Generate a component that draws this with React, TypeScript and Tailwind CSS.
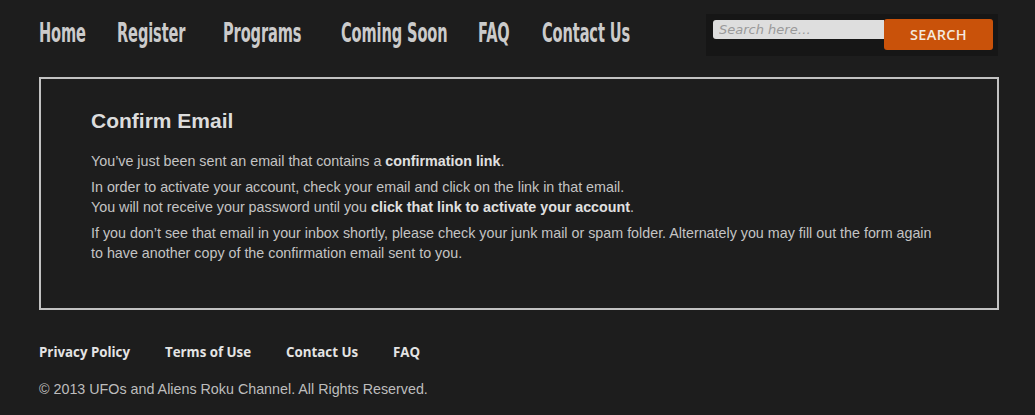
import React from 'react';

const navItems = [
  { label: 'Home', w: 'w-[44px]' },
  { label: 'Register', w: 'w-[72px]' },
  { label: 'Programs', w: 'w-[84px]' },
  { label: 'Coming Soon', w: 'w-[103px]' },
  { label: 'FAQ', w: 'w-[30px]' },
  { label: 'Contact Us', w: 'w-[91px]' },
];
const footerLinks = ['Privacy Policy', 'Terms of Use', 'Contact Us', 'FAQ'];

const App: React.FC = () => {
  return (
    <div className="min-h-[415px] w-full bg-[#1d1d1d] font-['Liberation_Sans',Arial,sans-serif] text-[#c6c6c6]">
      {/* Header */}
      <div className="flex items-start justify-between pl-[39px] pr-[37px] pt-[14px]">
        <nav className="flex gap-[34px] pt-[4px]">
          {navItems.map((item) => (
            <a key={item.label} href="#" className={`${item.w} block overflow-visible whitespace-nowrap`}>
              <span className="inline-block origin-left scale-x-[0.54] font-['DejaVu_Sans',sans-serif] text-[27px] font-bold leading-[30px] tracking-[-0.2px] text-[#cbcbcb]">
                {item.label}
              </span>
            </a>
          ))}
        </nav>
        <div className="flex h-[42px] w-[292px] shrink-0 items-start bg-[#161616] pl-[7px] pt-[5px]">
          <input
            type="text"
            placeholder="Search here…"
            className="mt-[1px] h-[19px] w-[171px] rounded-l-[3px] bg-[#dedede] px-[6px] font-['DejaVu_Sans',sans-serif] text-[13px] italic text-[#333] outline-none placeholder:text-[#9a9a9a]"
          />
          <button className="h-[31px] w-[109px] rounded-[3px] bg-[#c9520a] font-['Open_Sans',sans-serif] text-[14.5px] font-semibold tracking-[0.3px] text-[#f4e8de]">
            SEARCH
          </button>
        </div>
      </div>

      {/* Content box */}
      <div className="ml-[39px] mr-[36px] mt-[21px] border-2 border-[#c2c2c2] pl-[50px] pr-[40px] pt-[30px] pb-[45px]">
        <h1 className="text-[21px] font-bold leading-[24px] text-[#dcdcdc]">Confirm Email</h1>
        <div className="mt-[18px] text-[14.3px] leading-[20px] text-[#c4c4c4]">
          <p>
            You’ve just been sent an email that contains a <b className="text-[#e0e0e0]">confirmation link</b>.
          </p>
          <p className="mt-[6px]">
            In order to activate your account, check your email and click on the link in that email.
            <br />
            You will not receive your password until you{' '}
            <b className="text-[#e0e0e0]">click that link to activate your account</b>.
          </p>
          <p className="mt-[6px]">
            If you don’t see that email in your inbox shortly, please check your junk mail or spam folder. Alternately you may fill out the form again
            <br />
            to have another copy of the confirmation email sent to you.
          </p>
        </div>
      </div>

      {/* Footer */}
      <div className="pl-[39px] pt-[32px]">
        <div className="flex gap-[35px]">
          {footerLinks.map((link) => (
            <a key={link} href="#" className="font-['Open_Sans',sans-serif] text-[13.3px] font-bold leading-[20px] text-[#e4e4e4]">
              {link}
            </a>
          ))}
        </div>
        <p className="mt-[17px] text-[14.3px] leading-[20px] text-[#bdbdbd]">© 2013 UFOs and Aliens Roku Channel. All Rights Reserved.</p>
      </div>
    </div>
  );
};

export default App;
